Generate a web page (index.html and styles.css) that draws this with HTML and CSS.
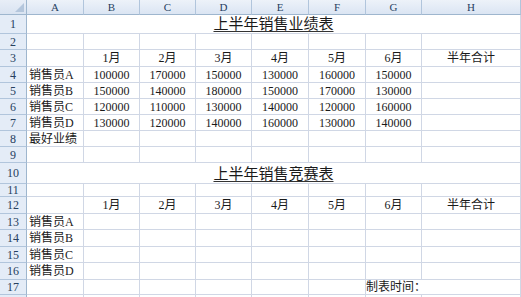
FILE: index.html
```html
<!DOCTYPE html>
<html lang="zh">
<head>
<meta charset="utf-8">
<link rel="stylesheet" href="styles.css">
</head>
<body>
<div class="sheet">
  <div class="corner"><span class="tri"></span></div>
  <div class="ch">A</div><div class="ch">B</div><div class="ch">C</div><div class="ch">D</div><div class="ch">E</div><div class="ch">F</div><div class="ch">G</div><div class="ch">H</div>

  <div class="rh">1</div>
  <div class="c title"><span>上半年销售业绩表</span></div>

  <div class="rh">2</div>
  <div class="c"></div><div class="c"></div><div class="c"></div><div class="c"></div><div class="c"></div><div class="c"></div><div class="c"></div><div class="c"></div>

  <div class="rh">3</div>
  <div class="c"></div><div class="c m">1月</div><div class="c m">2月</div><div class="c m">3月</div><div class="c m">4月</div><div class="c m">5月</div><div class="c m">6月</div><div class="c m">半年合计</div>

  <div class="rh">4</div>
  <div class="c l">销售员A</div><div class="c m">100000</div><div class="c m">170000</div><div class="c m">150000</div><div class="c m">130000</div><div class="c m">160000</div><div class="c m">150000</div><div class="c"></div>

  <div class="rh">5</div>
  <div class="c l">销售员B</div><div class="c m">150000</div><div class="c m">140000</div><div class="c m">180000</div><div class="c m">150000</div><div class="c m">170000</div><div class="c m">130000</div><div class="c"></div>

  <div class="rh">6</div>
  <div class="c l">销售员C</div><div class="c m">120000</div><div class="c m">110000</div><div class="c m">130000</div><div class="c m">140000</div><div class="c m">120000</div><div class="c m">160000</div><div class="c"></div>

  <div class="rh">7</div>
  <div class="c l">销售员D</div><div class="c m">130000</div><div class="c m">120000</div><div class="c m">140000</div><div class="c m">160000</div><div class="c m">130000</div><div class="c m">140000</div><div class="c"></div>

  <div class="rh">8</div>
  <div class="c l">最好业绩</div><div class="c"></div><div class="c"></div><div class="c"></div><div class="c"></div><div class="c"></div><div class="c"></div><div class="c"></div>

  <div class="rh">9</div>
  <div class="c"></div><div class="c"></div><div class="c"></div><div class="c"></div><div class="c"></div><div class="c"></div><div class="c"></div><div class="c"></div>

  <div class="rh">10</div>
  <div class="c title"><span>上半年销售竞赛表</span></div>

  <div class="rh">11</div>
  <div class="c"></div><div class="c"></div><div class="c"></div><div class="c"></div><div class="c"></div><div class="c"></div><div class="c"></div><div class="c"></div>

  <div class="rh">12</div>
  <div class="c"></div><div class="c m">1月</div><div class="c m">2月</div><div class="c m">3月</div><div class="c m">4月</div><div class="c m">5月</div><div class="c m">6月</div><div class="c m">半年合计</div>

  <div class="rh">13</div>
  <div class="c l">销售员A</div><div class="c"></div><div class="c"></div><div class="c"></div><div class="c"></div><div class="c"></div><div class="c"></div><div class="c"></div>

  <div class="rh">14</div>
  <div class="c l">销售员B</div><div class="c"></div><div class="c"></div><div class="c"></div><div class="c"></div><div class="c"></div><div class="c"></div><div class="c"></div>

  <div class="rh">15</div>
  <div class="c l">销售员C</div><div class="c"></div><div class="c"></div><div class="c"></div><div class="c"></div><div class="c"></div><div class="c"></div><div class="c"></div>

  <div class="rh">16</div>
  <div class="c l">销售员D</div><div class="c"></div><div class="c"></div><div class="c"></div><div class="c"></div><div class="c"></div><div class="c"></div><div class="c"></div>

  <div class="rh">17</div>
  <div class="c"></div><div class="c"></div><div class="c"></div><div class="c"></div><div class="c"></div><div class="c"></div><div class="c l span2">制表时间：</div>

  <div class="rh"></div>
  <div class="c"></div><div class="c"></div><div class="c"></div><div class="c"></div><div class="c"></div><div class="c"></div><div class="c"></div><div class="c"></div>
</div>
</body>
</html>
```

FILE: styles.css
```css
html, body {
  margin: 0;
  padding: 0;
  background: #ffffff;
  overflow: hidden;
}

.sheet {
  display: grid;
  grid-template-columns: 27px 57px 56px 56px 56px 57px 57px 56px 99px;
  grid-template-rows: 15px 19px 16px 17px 16px 16px 16px 16px 16px 16px 21px 13px 17px 16px 17px 16px 17px 15px 16px;
  width: 521px;
  font-family: "Liberation Serif", "Noto Sans CJK SC", serif;
  font-size: 12px;
  color: #1a1a1a;
}

.corner {
  position: relative;
  background: linear-gradient(#e8eef7, #d9e3f1);
  border-right: 1px solid #9eb6ce;
  border-bottom: 1px solid #9eb6ce;
  box-sizing: border-box;
}

.tri {
  position: absolute;
  right: 2px;
  bottom: 2px;
  width: 0;
  height: 0;
  border-left: 9px solid transparent;
  border-bottom: 9px solid #b4c6dc;
}

.ch {
  box-sizing: border-box;
  background: linear-gradient(#edf2f9, #dbe5f3);
  border-right: 1px solid #b1c5dc;
  border-bottom: 1px solid #9eb6ce;
  display: flex;
  align-items: center;
  justify-content: center;
  font-size: 11px;
  color: #27415f;
  line-height: 1;
}

.rh {
  box-sizing: border-box;
  background: #e4ecf7;
  border-right: 1px solid #9eb6ce;
  border-bottom: 1px solid #b1c5dc;
  display: flex;
  align-items: center;
  justify-content: center;
  font-size: 12px;
  color: #27415f;
  line-height: 1;
}

.c {
  box-sizing: border-box;
  border-right: 1px solid #d0d7e5;
  border-bottom: 1px solid #d0d7e5;
  display: flex;
  align-items: center;
  white-space: nowrap;
  overflow: visible;
  line-height: 1;
}

.m {
  justify-content: center;
}

.l {
  justify-content: flex-start;
  padding-left: 2px;
}

.span2 {
  grid-column: span 2;
  padding-left: 0;
}

.title {
  grid-column: span 8;
  justify-content: center;
  align-items: flex-end;
  padding-bottom: 1px;
  font-size: 15px;
  color: #1a1a1a;
}

.title span {
  text-decoration: underline;
  text-decoration-color: #333;
  text-underline-offset: 2px;
}
```
